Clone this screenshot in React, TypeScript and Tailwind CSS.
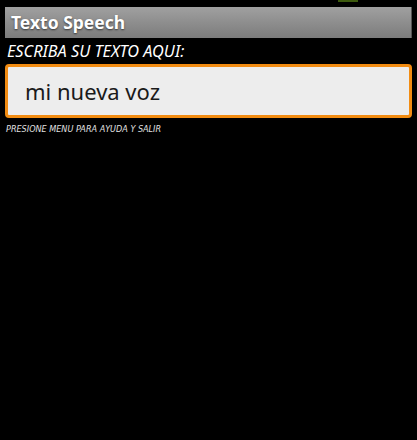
export default function App() {
  return (
    <div className="relative h-[440px] w-[417px] overflow-hidden bg-black" style={{ fontFamily: '"Noto Sans", "Open Sans", sans-serif' }}>
      <div className="absolute left-[338px] top-0 h-[2px] w-[20px] bg-[#3d5a0e]" />
      <div className="pt-[7px] px-[5px]">
        <div className="flex h-[31px] items-center border-r border-[#555] bg-gradient-to-b from-[#a0a0a0] to-[#7c7c7c] pl-[6px]">
          <span className="text-[17.5px] font-bold leading-none text-white [text-shadow:0_1px_2px_rgba(0,0,0,0.6)]">Texto Speech</span>
        </div>
      </div>
      <div className="px-[7px] pt-[2px] text-[16.3px] italic leading-[22px] text-white">ESCRIBA SU TEXTO AQUI:</div>
      <div className="px-[5px] pt-[2px]">
        <div className="flex h-[54px] items-center rounded-[4px] border-[3px] border-[#f28c12] bg-[#ededed] pl-[17px]">
          <span className="text-[22px] leading-none text-[#1a1a1a]">mi nueva voz</span>
        </div>
      </div>
      <div className="px-[6px] pt-[7px] text-[9px] italic leading-none text-[#e0e0e0]" style={{ fontFamily: '"DejaVu Sans Condensed", "DejaVu Sans", sans-serif' }}>
        PRESIONE MENU PARA AYUDA Y SALIR
      </div>
    </div>
  );
}
